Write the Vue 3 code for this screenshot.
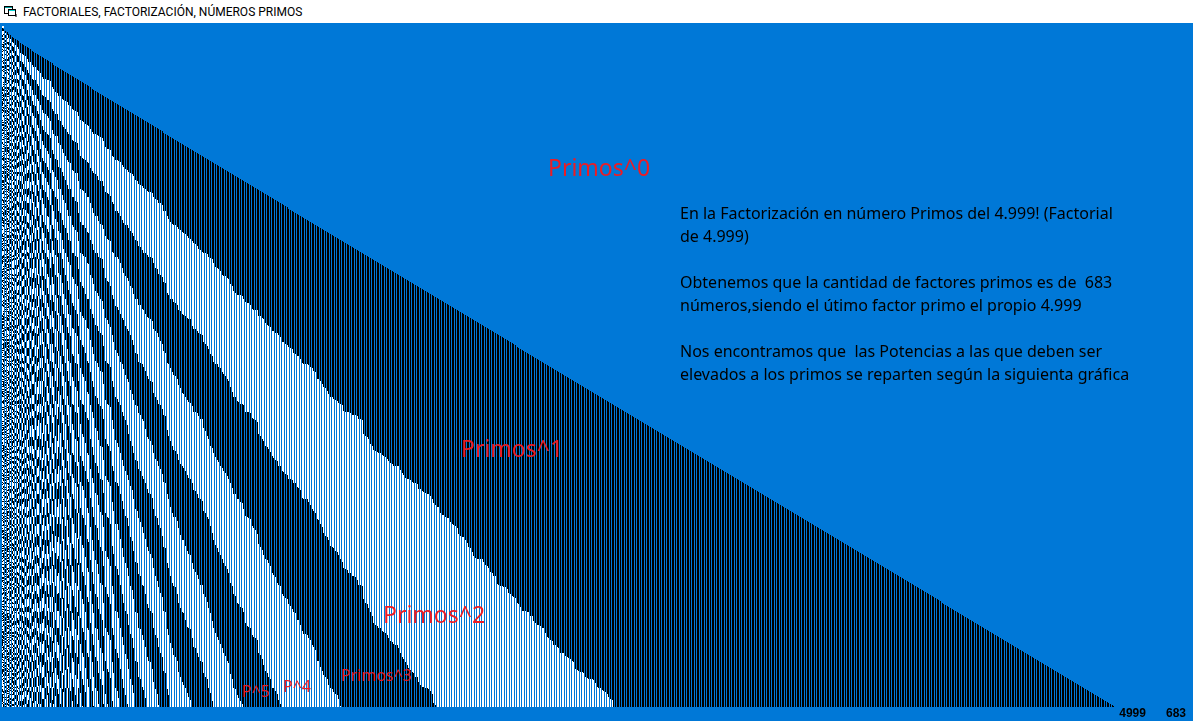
<script setup>
import { onMounted, ref } from 'vue'

const LIMIT = 4999
const ROWS = 683
const FIRST_ROW = 4
const chart = ref(null)

const primes = []
for (let n = 2; n <= LIMIT; n++) {
  if (primes.every((p) => n % p !== 0)) primes.push(n)
}

// One row per prime and per power of two
const steps = [...primes]
for (let n = 4; n <= LIMIT; n *= 2) steps.push(n)
steps.sort((a, b) => a - b)

// Exponent of p in the factorisation of n!
function exponent(n, p) {
  let total = 0
  for (let q = Math.floor(n / p); q > 0; q = Math.floor(q / p)) total += q
  return total
}

const labels = [
  { text: 'Primos^0', name: 'p0' },
  { text: 'Primos^1', name: 'p1' },
  { text: 'Primos^2', name: 'p2' },
  { text: 'Primos^3', name: 'p3' },
  { text: 'P^4', name: 'p4' },
  { text: 'P^5', name: 'p5' }
]

onMounted(() => {
  const ctx = chart.value.getContext('2d')
  ctx.fillStyle = '#fff'
  ctx.fillRect(2, FIRST_ROW - 2, 2, 2)
  steps.forEach((step, row) => {
    // The row covers every number up to the one before the next step
    const n = (steps[row + 1] ?? LIMIT + 1) - 1
    primes.forEach((p, i) => {
      if (p > n) return
      ctx.fillStyle = exponent(n, p) % 2 ? '#000' : '#fff'
      ctx.fillRect(Math.round(((i + 1) * 5) / 3), FIRST_ROW + row, 1, 1)
    })
  })
})
</script>

<template>
  <div class="window">
    <header class="titlebar">
      <svg class="icon" width="14" height="13" viewBox="0 0 14 13" shape-rendering="crispEdges" aria-hidden="true">
        <path d="M11 9h2v3h-2z" fill="#777" />
        <path d="M0 1h9v8H0z" fill="#000" />
        <path d="M1 3h7v5H1z" fill="#fff" />
        <path d="M1 2h7v1H1z" fill="#00a0a0" />
        <path d="M4 4h8v7H4z" fill="#000" />
        <path d="M5 6h6v4H5z" fill="#fff" />
        <path d="M5 5h6v1H5z" fill="#00d0d0" />
      </svg>
      <h1>FACTORIALES, FACTORIZACIÓN, NÚMEROS PRIMOS</h1>
    </header>
    <main class="stage">
      <canvas ref="chart" class="chart" width="1120" :height="ROWS"></canvas>
      <span v-for="l in labels" :key="l.name" class="label" :class="l.name">{{ l.text }}</span>
      <section class="note">
        <p>En la Factorización en número Primos del 4.999! (Factorial<br />de 4.999)</p>
        <p>Obtenemos que la cantidad de factores primos es de&nbsp; 683<br />números,siendo el útimo factor primo el propio 4.999</p>
        <p>Nos encontramos que&nbsp; las Potencias a las que deben ser<br />elevados a los primos se reparten según la siguienta gráfica</p>
      </section>
      <footer class="totals"><span>4999</span><span>683</span></footer>
    </main>
  </div>
</template>

<style>
body {
  margin: 0;
  background: #0078d7;
}
</style>

<style scoped>
.window {
  min-height: 100vh;
  display: flex;
  flex-direction: column;
  overflow: hidden;
  color: #000;
}
.titlebar {
  display: flex;
  align-items: center;
  gap: 5px;
  height: 23px;
  padding-left: 4px;
  background: #fff;
}
h1 {
  margin: 0;
  font: 400 12px/16px Roboto, "Noto Sans", sans-serif;
}
.stage {
  position: relative;
  flex: 1;
  padding-top: 1px;
  background: #0078d7;
}
.chart {
  display: block;
}
.label {
  position: absolute;
  color: #ed1c24;
  font: 400 23px/28px "Noto Sans", sans-serif;
  white-space: nowrap;
}
.p0 { left: 548px; top: 130px; }
.p1 { left: 461px; top: 411px; }
.p2 { left: 383px; top: 577px; }
.p3 { left: 341px; top: 638px; font-size: 16px; }
.p4 { left: 283px; top: 649px; font-size: 16px; }
.p5 { left: 242px; top: 654px; font-size: 16px; }
.note {
  position: absolute;
  left: 680px;
  top: 179px;
  font: 400 16px/23px "Noto Sans", sans-serif;
  white-space: nowrap;
}
.note p {
  margin: 0 0 23px;
}
.totals {
  display: flex;
  justify-content: flex-end;
  gap: 20px;
  padding-right: 7px;
  font: 700 12px/12px "Liberation Sans", Arial, sans-serif;
}
</style>
